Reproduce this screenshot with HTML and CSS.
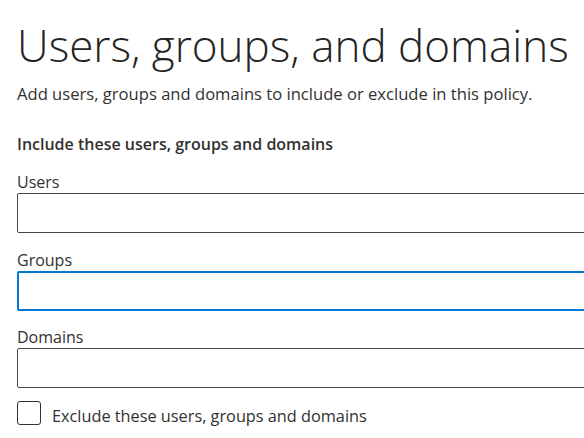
FILE: index.html
```html
<!DOCTYPE html>
<html lang="en">
<head>
    <meta charset="UTF-8">
    <title>Users, groups, and domains</title>
    <link rel="stylesheet" href="styles.css">
</head>
<body>

<div class="panel">
    <h1 class="page-title">Users, groups, and domains</h1>
    <p class="page-desc">Add users, groups and domains to include or exclude in this policy.</p>

    <div class="section-title">Include these users, groups and domains</div>

    <div class="field">
        <label class="field-label" for="users">Users</label>
        <input class="field-input" id="users" type="text">
    </div>

    <div class="field">
        <label class="field-label" for="groups">Groups</label>
        <input class="field-input focused" id="groups" type="text">
    </div>

    <div class="field">
        <label class="field-label" for="domains">Domains</label>
        <input class="field-input" id="domains" type="text">
    </div>

    <label class="check-row">
        <span class="check-box"></span>
        <span class="check-text">Exclude these users, groups and domains</span>
    </label>
</div>

</body>
</html>
```

FILE: styles.css
```css
html, body {
    margin: 0;
    padding: 0;
    background: #ffffff;
    color: #323130;
    font-family: 'Open Sans', 'Noto Sans', Arial, sans-serif;
    overflow: hidden;
}

.panel {
    padding: 19px 0 0 17px;
    width: 600px;
}

.page-title {
    font-size: 44px;
    font-weight: 300;
    line-height: 52px;
    margin: 0;
    color: #252423;
}

.page-desc {
    font-size: 16.6px;
    line-height: 22px;
    margin: 12px 0 0 0;
}

.section-title {
    font-size: 16px;
    font-weight: 600;
    line-height: 22px;
    margin-top: 28px;
}

.field { margin-top: 16px; }
.field + .field { margin-top: 15.5px; }

.field-label {
    display: block;
    font-size: 16px;
    line-height: 22px;
}

.field-input {
    display: block;
    box-sizing: border-box;
    width: 600px;
    height: 40px;
    margin: 0;
    border: 1px solid #484644;
    border-radius: 2px;
    background: #ffffff;
    outline: none;
    font: inherit;
}

.field-input.focused {
    border: 2px solid #0078d4;
}

/* casilla de exclusión */
.check-row {
    display: flex;
    align-items: flex-start;
    gap: 11px;
    margin-top: 12.5px;
}
.check-box {
    flex: none;
    width: 24px;
    height: 24px;
    box-sizing: border-box;
    border: 1px solid #323130;
    border-radius: 3px;
}
.check-text {
    font-size: 16.3px;
    line-height: 22px;
    margin-top: 4px;
}
```
